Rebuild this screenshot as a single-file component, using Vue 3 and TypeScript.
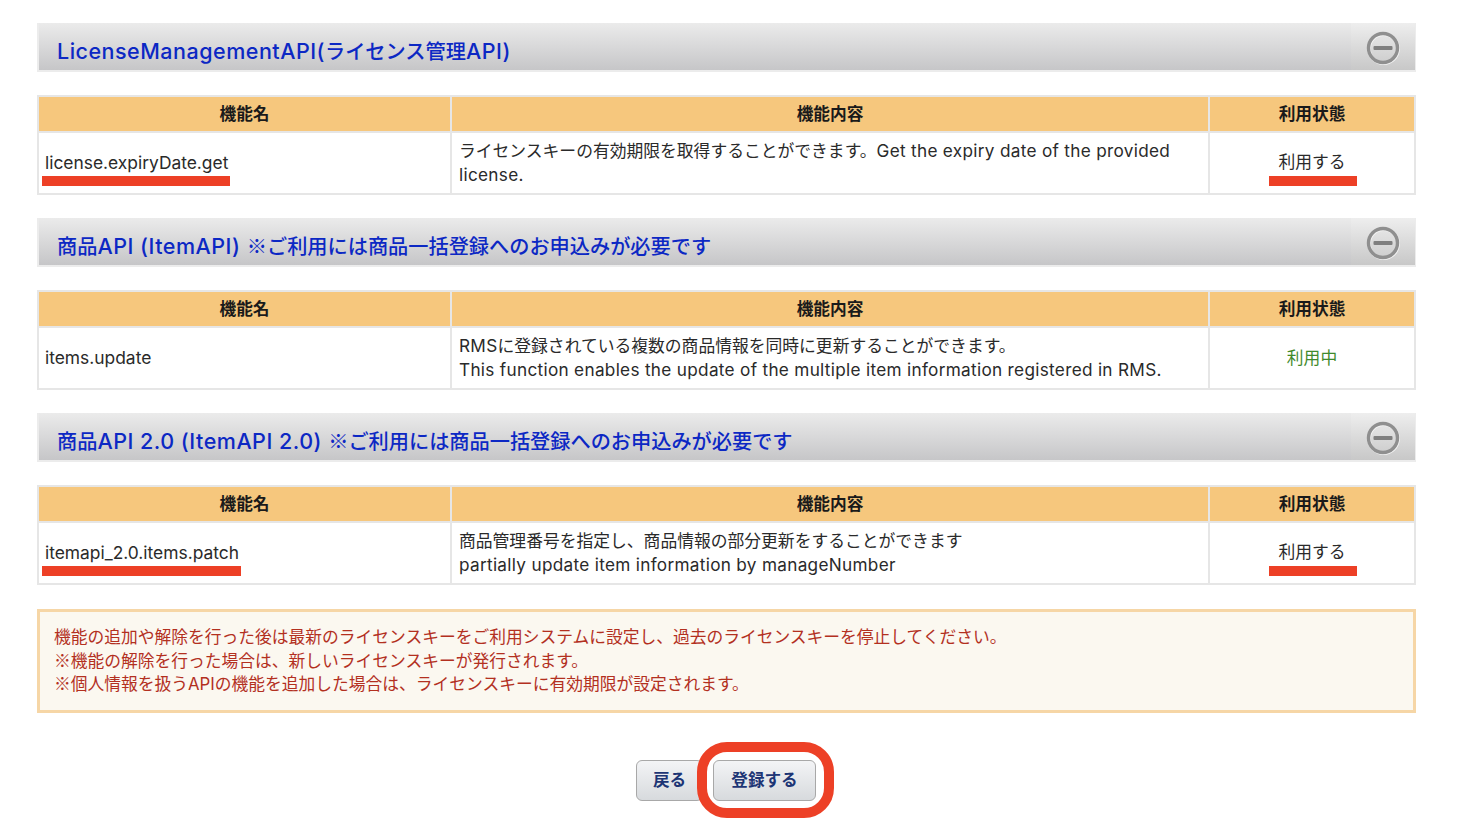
<script setup lang="ts">
interface Section {
  title: string
  name: string
  desc: string[]
  status: string
  active: boolean
  mark: boolean
}
const sections: Section[] = [
  {
    title: 'LicenseManagementAPI(ライセンス管理API)',
    name: 'license.expiryDate.get',
    desc: ['ライセンスキーの有効期限を取得することができます。Get the expiry date of the provided', 'license.'],
    status: '利用する',
    active: false,
    mark: true,
  },
  {
    title: '商品API (ItemAPI) ※ご利用には商品一括登録へのお申込みが必要です',
    name: 'items.update',
    desc: ['RMSに登録されている複数の商品情報を同時に更新することができます。', 'This function enables the update of the multiple item information registered in RMS.'],
    status: '利用中',
    active: true,
    mark: false,
  },
  {
    title: '商品API 2.0 (ItemAPI 2.0) ※ご利用には商品一括登録へのお申込みが必要です',
    name: 'itemapi_2.0.items.patch',
    desc: ['商品管理番号を指定し、商品情報の部分更新をすることができます', 'partially update item information by manageNumber'],
    status: '利用する',
    active: false,
    mark: true,
  },
]
const notices: string[] = [
  '機能の追加や解除を行った後は最新のライセンスキーをご利用システムに設定し、過去のライセンスキーを停止してください。',
  '※機能の解除を行った場合は、新しいライセンスキーが発行されます。',
  '※個人情報を扱うAPIの機能を追加した場合は、ライセンスキーに有効期限が設定されます。',
]
function runs(text: string): { t: string; lat: boolean }[] {
  return text
    .split(/([\x20-\x7e]+)/)
    .filter((t) => t.length > 0)
    .map((t) => ({ t, lat: /^[\x20-\x7e]/.test(t) }))
}
</script>

<template>
  <div class="page">
    <section v-for="s in sections" :key="s.name" class="section">
      <header class="heading">
        <h2><span v-for="(r, i) in runs(s.title)" :key="i" :class="{ lat: r.lat }">{{ r.t }}</span></h2>
        <span class="toggle">
          <svg width="36" height="36" viewBox="0 0 36 36" aria-hidden="true">
            <circle cx="18" cy="18" r="14.5" fill="none" stroke="#f4f4f4" stroke-width="3.5" transform="translate(.6 .8)" />
            <circle cx="18" cy="18" r="14.5" fill="none" stroke="#8f8f8f" stroke-width="3.4" />
            <rect x="8.5" y="16" width="19" height="4" rx="1" fill="#7f7f7f" />
          </svg>
        </span>
      </header>
      <table>
        <colgroup>
          <col class="c1" />
          <col class="c2" />
          <col class="c3" />
        </colgroup>
        <thead>
          <tr>
            <th>機能名</th>
            <th>機能内容</th>
            <th>利用状態</th>
          </tr>
        </thead>
        <tbody>
          <tr>
            <td class="name" :class="{ lifted: s.mark }">
              <span class="marked">{{ s.name }}<i v-if="s.mark" class="line"></i></span>
            </td>
            <td class="desc">
              <div v-for="d in s.desc" :key="d"><span v-for="(r, i) in runs(d)" :key="i" :class="{ lat: r.lat }">{{ r.t }}</span></div>
            </td>
            <td class="status" :class="{ lifted: s.mark }">
              <span class="marked" :class="{ inuse: s.active }">{{ s.status }}<i v-if="s.mark" class="line wide"></i></span>
            </td>
          </tr>
        </tbody>
      </table>
    </section>

    <div class="notice">
      <p v-for="n in notices" :key="n"><span v-for="(r, i) in runs(n)" :key="i" :class="{ lat: r.lat }">{{ r.t }}</span></p>
    </div>

    <div class="actions">
      <button type="button" class="btn back">戻る</button>
      <span class="ringed">
        <button type="button" class="btn submit">登録する</button>
        <i class="ring"></i>
      </span>
    </div>
  </div>
</template>

<style>
html, body { margin: 0; background: #fff; overflow: hidden; }
</style>

<style scoped>
.page {
  box-sizing: border-box;
  width: 1459px;
  height: 820px;
  padding: 23px 43px 0 37px;
  font-family: "Noto Sans CJK JP", sans-serif;
  font-size: 16.8px;
  color: #2a2a2a;
  overflow: hidden;
}
.lat { font-family: "Inter", "Noto Sans CJK JP", sans-serif; }
.section { margin-bottom: 23px; }
.heading {
  box-sizing: border-box;
  height: 49px;
  display: flex;
  align-items: center;
  justify-content: space-between;
  margin-bottom: 23px;
  border: 2px solid #ececec;
  border-top: 0;
  border-right-width: 1px;
  background: linear-gradient(#ebebeb, #c6c6c8);
}
.heading h2 {
  margin: 0 0 0 18px;
  padding-top: 8px;
  font-size: 20.2px;
  font-weight: 500;
  color: #0c28c4;
  white-space: nowrap;
}
.heading h2 .lat { font-size: 21.5px; letter-spacing: 0.5px; }
.toggle {
  align-self: stretch;
  width: 64px;
  display: flex;
  align-items: center;
  justify-content: center;
  padding: 3px 0 0 0;
  box-sizing: border-box;
  background: linear-gradient(#eeeeee, #c8c8c8);
}
table {
  width: 100%;
  table-layout: fixed;
  border-collapse: collapse;
  border: 2px solid #e6e6e6;
}
.c1 { width: 413px; }
.c3 { width: 206px; }
th, td { border: 2px solid #e6e6e6; box-sizing: border-box; }
th {
  height: 36px;
  padding: 0 0 2px;
  background: #f6c77d;
  font-weight: 700;
  font-size: 16.7px;
  color: #1a1a1a;
  text-align: center;
}
td {
  height: 62px;
  padding: 0 6px;
  line-height: 24px;
}
.desc { padding: 0 30px 3px 7px; }
.desc .lat { font-size: 17.2px; letter-spacing: 0.3px; line-height: 1; }
.name { font-family: "Inter", "Noto Sans CJK JP", sans-serif; font-size: 17.4px; padding-bottom: 1px; }
.status { text-align: center; padding-bottom: 3px; }
.marked { position: relative; display: inline-block; }
.name.lifted { padding-bottom: 0; }
.status.lifted { padding-bottom: 5px; }
.inuse { color: #3f8a2c; }
.line {
  position: absolute;
  left: -3px;
  right: -2px;
  top: 25px;
  height: 10px;
  background: #ed4026;
}
.line.wide { left: -9px; right: -11px; top: 27px; }
.notice {
  box-sizing: border-box;
  height: 104px;
  margin-top: 24px;
  padding: 13px 14px 0;
  border: 3px solid #f6d6a6;
  background: #fbf8f0;
  color: #b3301f;
  font-size: 16.75px;
  line-height: 23.6px;
}
.notice p { margin: 0; }
.actions {
  display: flex;
  justify-content: center;
  gap: 10px;
  margin-top: 47px;
  padding-right: 1px;
}
.btn {
  box-sizing: border-box;
  height: 41px;
  border: 1px solid #a8a8a8;
  border-radius: 6px;
  background: linear-gradient(#f3f4f6, #d7dadd);
  color: #1d3575;
  font: 700 16.6px "Noto Sans CJK JP", sans-serif;
  padding: 0 0 3px;
}
.back { width: 67px; }
.submit { width: 103px; display: block; }
.ringed { position: relative; display: block; }
.ring {
  position: absolute;
  left: -16px;
  right: -18px;
  top: -18px;
  bottom: -17px;
  border: 10px solid #ed4026;
  border-radius: 30px;
  background: transparent;
}
</style>
